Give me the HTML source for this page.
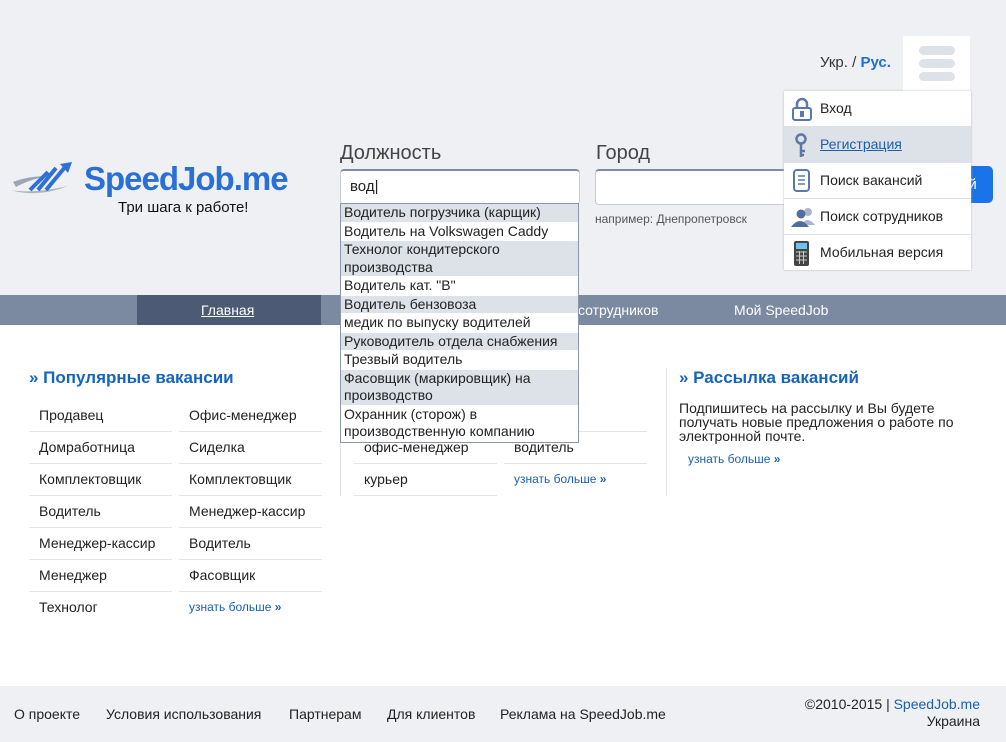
<!DOCTYPE html><html><head><meta charset="utf-8"><style>
body{margin:0;width:1006px;height:742px;position:relative;overflow:hidden;background:#fff;font-family:"Liberation Sans",sans-serif;color:#222}
.a{position:absolute}
.top{left:0;top:0;width:1006px;height:295px;background:#eef0f4}
.nav{left:0;top:295px;width:1006px;height:30px;background:#7b8aa1;color:#fff;font-size:14px}
.nav span{position:absolute;top:7px}
.lbl{font-size:20px;color:#444}
.inp{background:#fff;border:1px solid #c8ccd4;border-top:2px solid #7f8da3;border-radius:4px;box-sizing:border-box}
.dd{left:340px;top:203px;width:239px;border:1px solid #8a95a8;background:#fff;font-size:14px;line-height:17.5px;box-sizing:border-box}
.dd div{padding:0 3px;border-bottom:1px solid #fff}
.dd .g{background:#dde1e8}
.menu{left:784px;top:91px;width:187px;background:#fff;box-shadow:0 0 2px #bbb;font-size:14px}
.menu div{height:35px;border-bottom:1px solid #dde1e8;position:relative;line-height:35px;padding-left:36px}
.menu svg{position:absolute;left:7px;top:6px}
h2{position:absolute;margin:0;font-size:17px;color:#1565c0;font-weight:bold}
.list{font-size:14px}
.list div{position:absolute;width:143px;height:32px;box-sizing:border-box;border-bottom:1px solid #e2e4e8;line-height:31px;padding-left:10px}
.more{color:#1a5fb0;font-size:12px}
.foot{left:0;top:686px;width:1006px;height:56px;background:#eef0f4;font-size:14px}
</style></head><body>
<div class="a top"></div>
<svg class="a" style="left:8px;top:160px" width="70" height="38" viewBox="0 0 70 38"><path d="M5 22 Q20 16 40 16 Q20 20 8 27Z" fill="#9aa6b8"/><path d="M2 30 Q25 34 60 26 Q30 38 2 30Z" fill="#aab4c4"/><path d="M22 30 L40 12 M30 30 L48 8 M38 30 L58 6" stroke="#2f6fd6" stroke-width="4"/><path d="M52 4 L64 2 L60 13Z" fill="#2f6fd6"/></svg>
<div class="a" style="left:84px;top:160px;font-size:33px;color:#2a6fd8;font-weight:bold;letter-spacing:-1px">SpeedJob.me</div>
<div class="a" style="left:118px;top:199px;font-size:15px;color:#111">Три шага к работе!</div>
<div class="a lbl" style="left:340px;top:142px">Должность</div>
<div class="a lbl" style="left:596px;top:142px">Город</div>
<div class="a inp" style="left:340px;top:169px;width:240px;height:36px"></div>
<div class="a" style="left:350px;top:178px;font-size:15px">вод|</div>
<div class="a inp" style="left:595px;top:169px;width:200px;height:36px"></div>
<div class="a" style="left:595px;top:212px;font-size:12px;color:#555">например: Днепропетровск</div>
<div class="a" style="left:960px;top:166px;width:33px;height:37px;background:#1a73e8;border-radius:0 5px 5px 0;color:#fff;font-size:15px;line-height:37px">ий</div>
<div class="a" style="left:820px;top:54px;font-size:15px;color:#333">Укр. / <b style="color:#1a6fd8">Рус.</b></div>
<div class="a" style="left:903px;top:36px;width:67px;height:60px;background:#fff"></div>
<div class="a" style="left:919px;top:46px;width:36px;height:9px;border-radius:5px;background:#dde1e8"></div>
<div class="a" style="left:919px;top:59px;width:36px;height:9px;border-radius:5px;background:#dde1e8"></div>
<div class="a" style="left:919px;top:72px;width:36px;height:9px;border-radius:5px;background:#dde1e8"></div>
<div class="a menu">
<div><svg width="22" height="24"><path d="M6 11V7a5 5 0 0 1 10 0v4" stroke="#5b79a8" stroke-width="2.5" fill="none"/><rect x="2" y="11" width="18" height="12" rx="2" fill="#fff" stroke="#5b79a8" stroke-width="2"/><rect x="9" y="14" width="4" height="6" fill="#5b79a8"/></svg>Вход</div>
<div style="background:#dde1e8"><svg width="22" height="26"><circle cx="10" cy="6" r="4.5" fill="none" stroke="#5b79a8" stroke-width="2.5"/><path d="M10 10v14M10 18h4M10 22h3" stroke="#5b79a8" stroke-width="2.5"/></svg><u style="color:#1a5fb0">Регистрация</u></div>
<div><svg width="22" height="24"><rect x="3" y="1" width="15" height="21" rx="3" fill="#fff" stroke="#5b79a8" stroke-width="2"/><path d="M7 7h7M7 11h7M7 15h7" stroke="#5b79a8" stroke-width="1.5"/></svg>Поиск вакансий</div>
<div><svg width="26" height="24"><circle cx="17" cy="7" r="4" fill="#aab6cc"/><path d="M10 20q6-10 14 0z" fill="#aab6cc"/><circle cx="10" cy="9" r="4.5" fill="#4f6d9e"/><path d="M0 22q9-12 18 0z" fill="#4f6d9e"/></svg>Поиск сотрудников</div>
<div style="border:0"><svg width="22" height="26"><rect x="3" y="0" width="15" height="25" rx="2" fill="#444"/><rect x="5" y="2" width="11" height="6" fill="#6ec4f0"/><path d="M5 11h11M5 15h11M5 19h11M8.5 10v13M12.5 10v13" stroke="#ccc" stroke-width="1"/></svg>Мобильная версия</div>
</div>
<div class="a nav"><div class="a" style="left:137px;top:0;width:184px;height:30px;background:#4c5a75"></div><span style="left:201px"><u>Главная</u></span><span style="left:578px">сотрудников</span><span style="left:734px">Мой SpeedJob</span></div>
<h2 style="left:29px;top:368px">&#187; Популярные вакансии</h2>
<div class="a list" style="left:29px;top:400px">
<div style="left:0;top:0">Продавец</div><div style="left:150px;top:0">Офис-менеджер</div>
<div style="left:0;top:32px">Домработница</div><div style="left:150px;top:32px">Сиделка</div>
<div style="left:0;top:64px">Комплектовщик</div><div style="left:150px;top:64px">Комплектовщик</div>
<div style="left:0;top:96px">Водитель</div><div style="left:150px;top:96px">Менеджер-кассир</div>
<div style="left:0;top:128px">Менеджер-кассир</div><div style="left:150px;top:128px">Водитель</div>
<div style="left:0;top:160px">Менеджер</div><div style="left:150px;top:160px">Фасовщик</div>
<div style="left:0;top:192px;border:0">Технолог</div><div style="left:150px;top:192px;border:0" class="more">узнать больше <b>»</b></div>
<div style="left:325px;top:32px">офис-менеджер</div><div style="left:475px;top:32px">водитель</div>
<div style="left:325px;top:64px">курьер</div><div style="left:475px;top:64px;border:0" class="more">узнать больше <b>»</b></div>
<div style="left:475px;top:0">к</div>
</div>
<div class="a" style="left:340px;top:368px;width:1px;height:128px;background:#e2e4e8"></div>
<div class="a" style="left:666px;top:368px;width:1px;height:128px;background:#e2e4e8"></div>
<h2 style="left:679px;top:368px">&#187; Рассылка вакансий</h2>
<div class="a" style="left:679px;top:401px;width:300px;font-size:14px;line-height:14px">Подпишитесь на рассылку и Вы будете получать новые предложения о работе по электронной почте.</div>
<div class="a more" style="left:688px;top:452px">узнать больше <b>»</b></div>
<div class="a dd">
<div class="g">Водитель погрузчика (карщик)</div><div>Водитель на Volkswagen Caddy</div><div class="g">Технолог кондитерского производства</div><div>Водитель кат. "В"</div><div class="g">Водитель бензовоза</div><div>медик по выпуску водителей</div><div class="g">Руководитель отдела снабжения</div><div>Трезвый водитель</div><div class="g">Фасовщик (маркировщик) на производство</div><div>Охранник (сторож) в производственную компанию</div>
</div>
<div class="a foot"><span class="a" style="left:14px;top:20px">О проекте</span><span class="a" style="left:106px;top:20px">Условия использования</span><span class="a" style="left:289px;top:20px">Партнерам</span><span class="a" style="left:387px;top:20px">Для клиентов</span><span class="a" style="left:500px;top:20px">Реклама на SpeedJob.me</span>
<span class="a" style="right:26px;top:10px">©2010-2015 | <span style="color:#1a5fb0">SpeedJob.me</span></span><span class="a" style="right:26px;top:27px">Украина</span></div>
</body></html>
